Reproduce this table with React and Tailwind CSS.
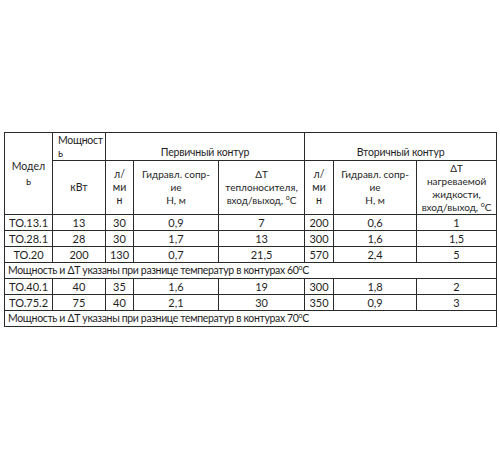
export default function App() {
  const c = 'border border-[#2a2a2a] text-center align-middle p-0';
  const rows1 = [
    ['ТО.13.1', '13', '30', '0,9', '7', '200', '0,6', '1'],
    ['ТО.28.1', '28', '30', '1,7', '13', '300', '1,6', '1,5'],
    ['ТО.20', '200', '130', '0,7', '21,5', '570', '2,4', '5'],
  ];
  const rows2 = [
    ['ТО.40.1', '40', '35', '1,6', '19', '300', '1,8', '2'],
    ['ТО.75.2', '75', '40', '2,1', '30', '350', '0,9', '3'],
  ];

  const deg = <span className="relative -top-[4px] text-[7px] leading-none">o</span>;

  const dataRow = (r) => (
    <tr key={r[0]} className="h-[16px]">
      {r.map((v, i) => (
        <td key={i} className={c + ' text-[11px] leading-[15px]'}>
          {v}
        </td>
      ))}
    </tr>
  );

  const note = (t) => (
    <tr className="h-[16px]">
      <td colSpan={8} className="border border-[#2a2a2a] text-left pl-[3px] text-[10.5px] tracking-[-0.35px] leading-[15px] p-0">
        Мощность и ΔТ указаны при разнице температур в контурах {t}
        {deg}C
      </td>
    </tr>
  );

  return (
    <div
      className="w-[500px] h-[450px] bg-white pt-[132px] pl-[4px] text-[#1e1e1e] text-[10px]"
      style={{ fontFamily: 'Lato, "Open Sans", sans-serif' }}
    >
      <table className="border-collapse table-fixed w-[492px]">
        <colgroup>
          <col className="w-[48px]" />
          <col className="w-[53px]" />
          <col className="w-[28px]" />
          <col className="w-[85px]" />
          <col className="w-[86px]" />
          <col className="w-[29px]" />
          <col className="w-[83px]" />
          <col className="w-[80px]" />
        </colgroup>
        <tbody>
          <tr className="h-[27px]">
            <td rowSpan={2} className={c + ' text-[10.5px] leading-[15px] px-[3px]'}>
              Модел
              <br />ь
            </td>
            <td className="border border-[#2a2a2a] text-left align-top pl-[5px] pt-[1px] text-[10.5px] tracking-[-0.3px] leading-[13px]">
              Мощност
              <br />ь
            </td>
            <td colSpan={3} className="border border-[#2a2a2a] text-center align-bottom pb-[1px] text-[10.5px] tracking-[-0.2px] leading-[13px]">
              Первичный контур
            </td>
            <td colSpan={3} className="border border-[#2a2a2a] text-center align-bottom pb-[1px] text-[10.5px] tracking-[-0.2px] leading-[13px]">
              Вторичный контур
            </td>
          </tr>
          <tr className="h-[54px]">
            <td className={c + ' text-[10.5px]'}>кВт</td>
            <td className={c + ' text-[10.5px] leading-[13px]'}>
              л/
              <br />
              ми
              <br />н
            </td>
            <td className={c + ' leading-[13px]'}>
              Гидравл. сопр-
              <br />
              ие
              <br />
              Н, м
            </td>
            <td className={c + ' leading-[13px]'}>
              ΔT
              <br />
              теплоносителя,
              <br />
              вход/выход, {deg}C
            </td>
            <td className={c + ' text-[10.5px] leading-[13px]'}>
              л/
              <br />
              ми
              <br />н
            </td>
            <td className={c + ' leading-[13px]'}>
              Гидравл. сопр-
              <br />
              ие
              <br />
              Н, м
            </td>
            <td className={c + ' leading-[13px]'}>
              ΔT
              <br />
              нагреваемой
              <br />
              жидкости,
              <br />
              вход/выход, {deg}C
            </td>
          </tr>
          {rows1.map(dataRow)}
          {note('60')}
          {rows2.map(dataRow)}
          {note('70')}
        </tbody>
      </table>
    </div>
  );
}
